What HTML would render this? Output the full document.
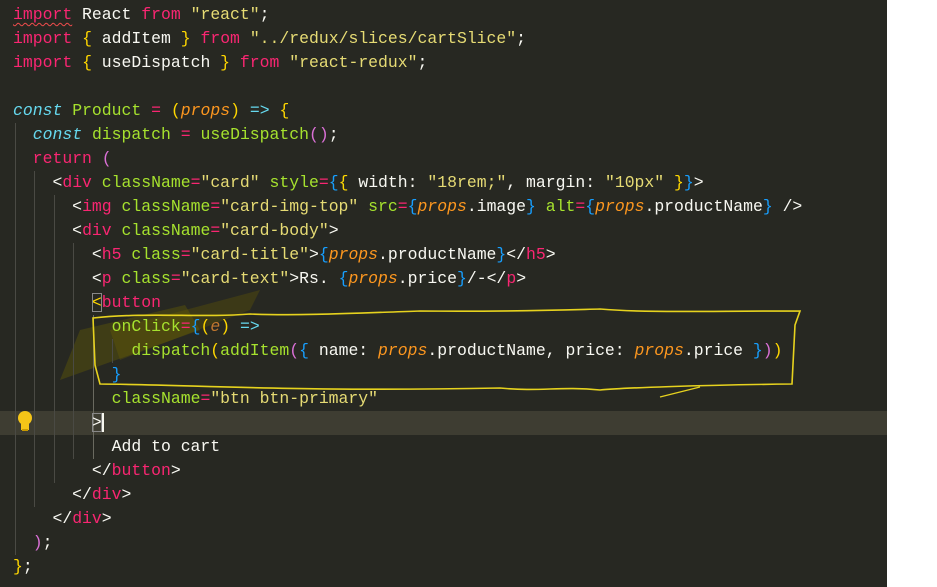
<!DOCTYPE html>
<html><head><meta charset="utf-8"><style>
html,body{margin:0;padding:0;width:937px;height:587px;overflow:hidden;background:#fff}
#ed{position:absolute;left:0;top:0;width:887px;height:587px;background:#272822}
#hl{position:absolute;left:0;top:411px;width:887px;height:24px;background:#3e3d32}
pre{position:absolute;left:13px;top:3px;margin:0;font-family:"Liberation Mono",monospace;font-size:16.45px;line-height:24px;color:#f8f8f2}
.k{color:#f92672}.c{color:#66d9ef;font-style:italic}.g{color:#a6e22e}.s{color:#e6db74}.p{color:#fd971f;font-style:italic}
.y{color:#ffd700}.v{color:#da70d6}.b{color:#179fff}
.sq{text-decoration:underline wavy #f14c4c;text-decoration-thickness:1px;text-underline-offset:3px}
.gd{position:absolute;width:1px;background:#4a4a44}
</style></head><body>
<div id="ed"></div><div id="hl"></div>
<svg style="position:absolute;left:0;top:0" width="937" height="587">
<path d="M60,380 L200,330 L185,305 L80,330 Z" fill="rgba(110,100,0,0.35)"/>
<path d="M110,330 L260,290 L250,310 L120,360 Z" fill="rgba(110,100,0,0.3)"/>
</svg>
<div class="gd" style="left:15px;top:123px;height:432px"></div>
<div class="gd" style="left:34px;top:171px;height:336px"></div>
<div class="gd" style="left:54px;top:195px;height:288px"></div>
<div class="gd" style="left:73px;top:243px;height:216px"></div>
<div class="gd" style="left:93px;top:315px;height:144px;background:#6a6a60"></div>
<div class="gd" style="left:112px;top:339px;height:24px"></div>
<pre><span class="k sq">import</span> React <span class="k">from</span> <span class="s">"react"</span>;
<span class="k">import</span> <span class="y">{</span> addItem <span class="y">}</span> <span class="k">from</span> <span class="s">"../redux/slices/cartSlice"</span>;
<span class="k">import</span> <span class="y">{</span> useDispatch <span class="y">}</span> <span class="k">from</span> <span class="s">"react-redux"</span>;

<span class="c">const</span> <span class="g">Product</span> <span class="k">=</span> <span class="y">(</span><span class="p">props</span><span class="y">)</span> <span class="c" style="font-style:normal">=&gt;</span> <span class="y">{</span>
  <span class="c">const</span> <span class="g">dispatch</span> <span class="k">=</span> <span class="g">useDispatch</span><span class="v">()</span>;
  <span class="k">return</span> <span class="v">(</span>
    &lt;<span class="k">div</span> <span class="g">className</span><span class="k">=</span><span class="s">"card"</span> <span class="g">style</span><span class="k">=</span><span class="b">{</span><span class="y">{</span> width: <span class="s">"18rem;"</span>, margin: <span class="s">"10px"</span> <span class="y">}</span><span class="b">}</span>&gt;
      &lt;<span class="k">img</span> <span class="g">className</span><span class="k">=</span><span class="s">"card-img-top"</span> <span class="g">src</span><span class="k">=</span><span class="b">{</span><span class="p">props</span>.image<span class="b">}</span> <span class="g">alt</span><span class="k">=</span><span class="b">{</span><span class="p">props</span>.productName<span class="b">}</span> /&gt;
      &lt;<span class="k">div</span> <span class="g">className</span><span class="k">=</span><span class="s">"card-body"</span>&gt;
        &lt;<span class="k">h5</span> <span class="g">class</span><span class="k">=</span><span class="s">"card-title"</span>&gt;<span class="b">{</span><span class="p">props</span>.productName<span class="b">}</span>&lt;/<span class="k">h5</span>&gt;
        &lt;<span class="k">p</span> <span class="g">class</span><span class="k">=</span><span class="s">"card-text"</span>&gt;Rs. <span class="b">{</span><span class="p">props</span>.price<span class="b">}</span>/-&lt;/<span class="k">p</span>&gt;
        <span style="outline:1px solid #888;outline-offset:-1px" class="y">&lt;</span><span class="k">button</span>
          <span class="g">onClick</span><span class="k">=</span><span class="b">{</span><span class="y">(</span><span class="p" style="color:#c0772e">e</span><span class="y">)</span> <span class="c" style="font-style:normal">=&gt;</span>
            <span class="g">dispatch</span><span class="y">(</span><span class="g">addItem</span><span class="v">(</span><span class="b">{</span> name: <span class="p">props</span>.productName, price: <span class="p">props</span>.price <span class="b">}</span><span class="v">)</span><span class="y">)</span>
          <span class="b">}</span>
          <span class="g">className</span><span class="k">=</span><span class="s">"btn btn-primary"</span>
        <span style="outline:1px solid #888;outline-offset:-1px">&gt;</span><span style="border-left:2px solid #f8f8f0"></span>
          Add to cart
        &lt;/<span class="k">button</span>&gt;
      &lt;/<span class="k">div</span>&gt;
    &lt;/<span class="k">div</span>&gt;
  <span class="v">)</span>;
<span class="y">}</span>;</pre>
<svg style="position:absolute;left:0;top:0" width="937" height="587">
<path d="M93,318 C150,312 200,318 250,314 C300,316 360,313 420,311 C500,312 560,310 600,309 C650,313 700,311 800,311 L795,325 L792,384 C700,385 620,388 600,390 C560,386 540,392 500,388 C300,392 200,385 100,384 L95,365 Z" fill="none" stroke="#e6d21e" stroke-width="1.6"/>
<path d="M660,397 L700,387" stroke="#e6d21e" stroke-width="1.4"/>
<g transform="translate(25,421)"><circle cx="0" cy="-3" r="7" fill="#f5c518"/><rect x="-4" y="2" width="8" height="7" fill="#f5c518"/><rect x="-3" y="8" width="6" height="2" fill="#c99a00"/></g>
</svg>
</body></html>
